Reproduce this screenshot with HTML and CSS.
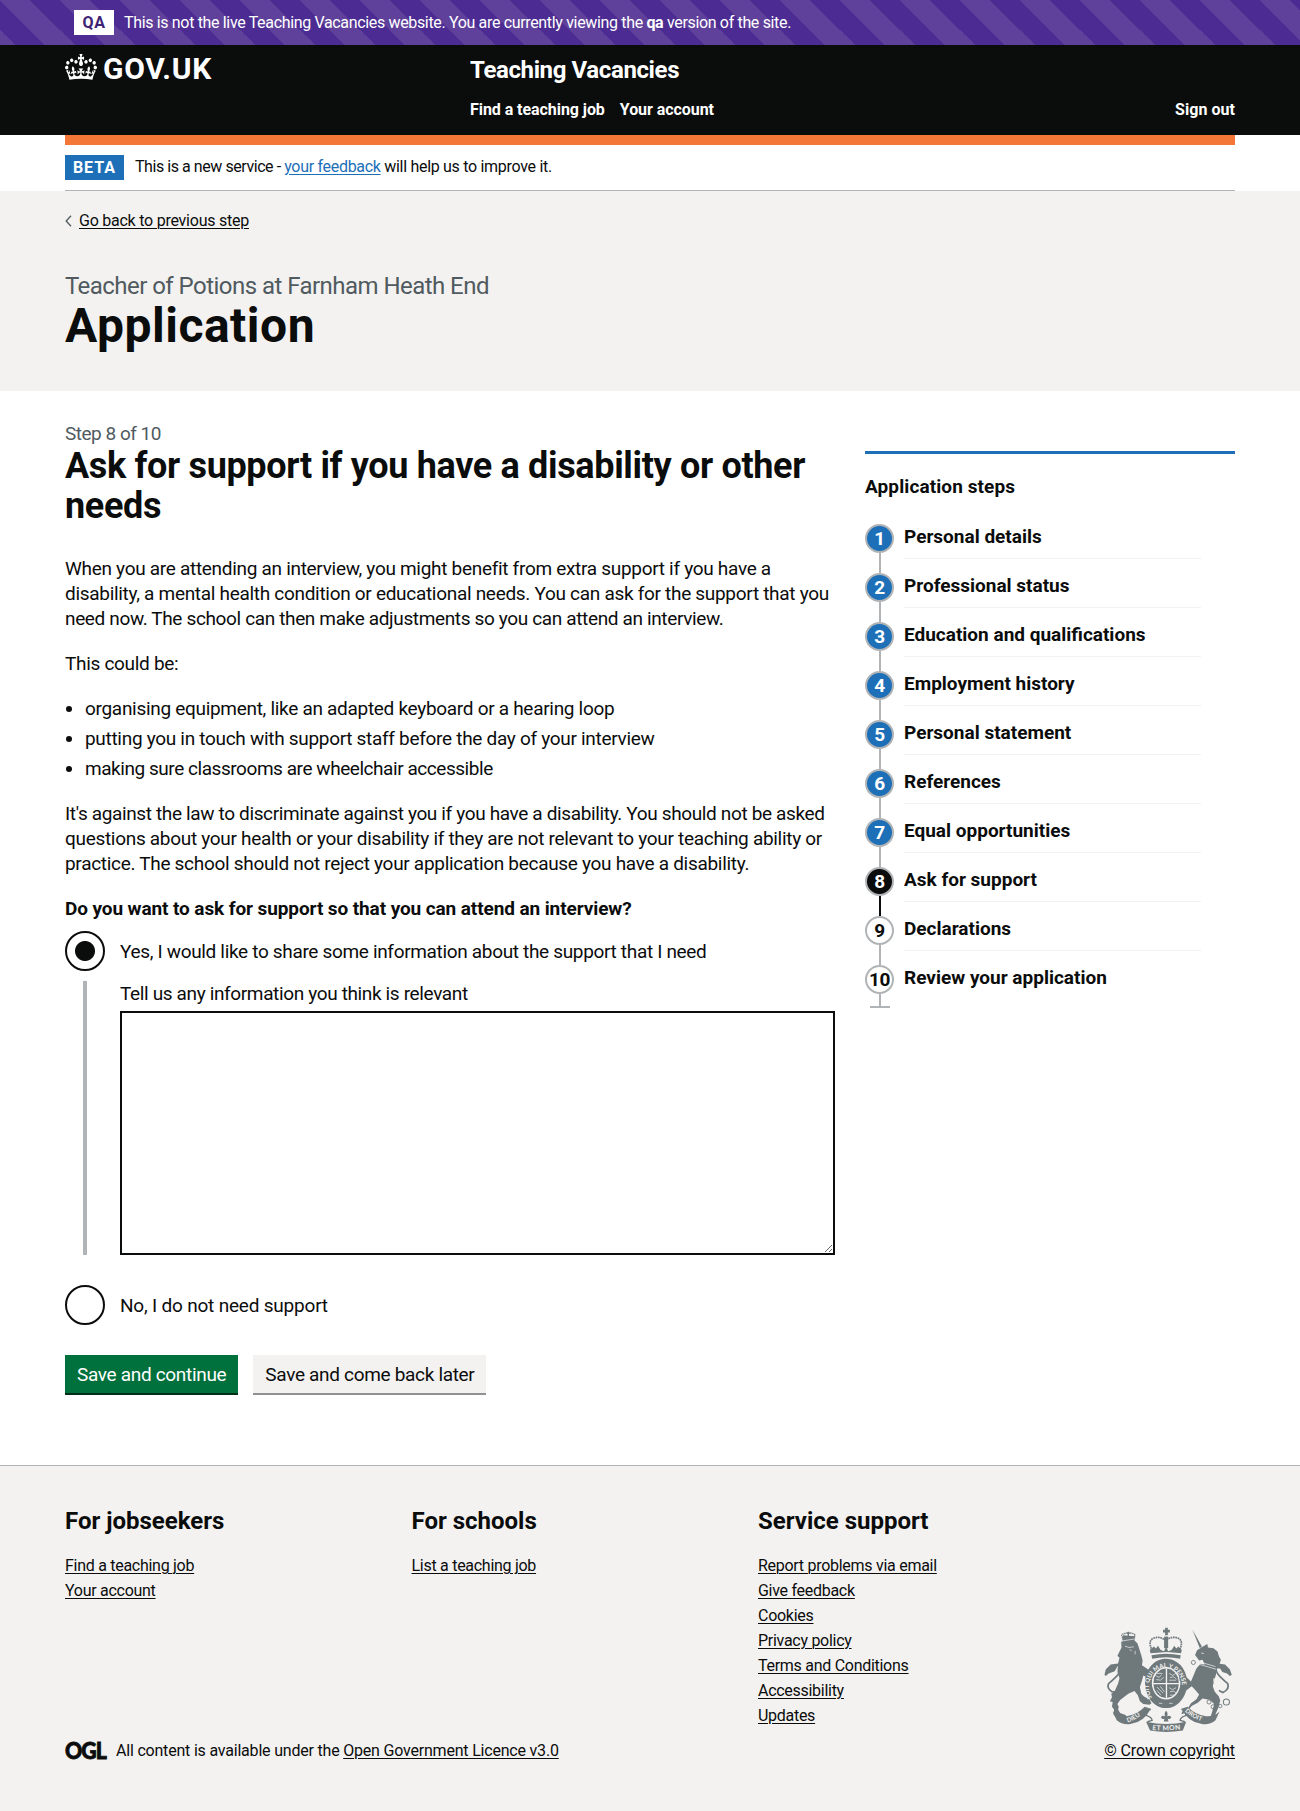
FILE: index.html
```
<!DOCTYPE html>
<html lang="en">
<head>
<meta charset="utf-8">
<title>Ask for support - Teaching Vacancies</title>
<link rel="stylesheet" href="styles.css">
</head>
<body>
<div class="environment">
  <strong class="environment-tag">QA</strong>
  <span class="environment-text">This is not the live Teaching Vacancies website. You are currently viewing the <b>qa</b> version of the site.</span>
</div>

<header class="header">
  <div class="container header-grid">
    <a class="logo" href="#">
      <svg class="crown" viewBox="0 0 132 97" preserveAspectRatio="none" aria-hidden="true"><path fill="#fff" fill-rule="evenodd" d="M25 30.2c3.5 1.5 7.7-.2 9.1-3.7 1.5-3.6-.2-7.8-3.9-9.2-3.6-1.4-7.6.3-9.1 3.9-1.4 3.5.3 7.5 3.9 9zM9 39.5c3.6 1.5 7.8-.2 9.2-3.7 1.5-3.6-.2-7.8-3.9-9.1-3.6-1.5-7.6.2-9.1 3.8-1.4 3.5.3 7.5 3.8 9zM4.4 57.2c3.5 1.5 7.7-.2 9.1-3.8 1.5-3.6-.2-7.7-3.9-9.1-3.5-1.5-7.6.3-9.1 3.8-1.4 3.5.3 7.6 3.9 9.1zm38.3-21.4c3.5 1.5 7.7-.2 9.1-3.8 1.5-3.6-.2-7.7-3.9-9.1-3.6-1.5-7.6.3-9.1 3.8-1.3 3.6.4 7.7 3.9 9.1zm64.4-5.6c-3.6 1.5-7.8-.2-9.1-3.7-1.5-3.6.2-7.8 3.8-9.2 3.6-1.4 7.7.3 9.2 3.9 1.3 3.5-.4 7.5-3.9 9zm15.9 9.3c-3.6 1.5-7.7-.2-9.1-3.7-1.5-3.6.2-7.8 3.7-9.1 3.6-1.5 7.7.2 9.2 3.8 1.5 3.5-.3 7.5-3.8 9zm4.7 17.7c-3.6 1.5-7.8-.2-9.2-3.8-1.5-3.6.2-7.7 3.9-9.1 3.6-1.5 7.7.3 9.2 3.8 1.3 3.5-.4 7.6-3.9 9.1zM89.3 35.8c-3.6 1.5-7.8-.2-9.2-3.8-1.4-3.6.2-7.7 3.9-9.1 3.6-1.5 7.7.3 9.2 3.8 1.4 3.6-.3 7.7-3.9 9.1zM69.7 17.7l8.9 4.7V9.3l-8.9 2.8c-.2-.3-.5-.6-.9-.9L72.4 0H59.6l3.5 11.2c-.3.3-.6.5-.9.9l-8.8-2.8v13.1l8.8-4.7c.3.3.6.7.9.9l-5 15.4v.1c-.2.8-.4 1.6-.4 2.4 0 4.1 3.1 7.5 7 8.1h.2c.3 0 .7.1 1 .1.4 0 .7 0 1-.1h.2c4-.6 7.1-4.1 7.1-8.1 0-.8-.1-1.7-.4-2.4V34l-5.1-15.4c.4-.2.7-.6 1-.9zM66 92.8c16.9 0 32.8 1.1 47.1 3.2 4-16.9 8.9-26.7 14-33.5l-9.6-3.4c1 4.9 1.1 7.2 0 10.2-1.5-1.4-3-4.3-4.2-8.7L108.6 76c2.8-2 5-3.2 7.5-3.3-4.4 9.4-10 11.9-13.6 11.2-4.3-.8-6.3-4.6-5.6-7.9 1-4.7 5.7-5.9 8-.5 4.3-8.7-3-11.4-7.6-8.8 7.1-7.2 7.9-13.5 2.1-21.1-8 6.1-8.1 12.3-4.5 20.8-4.7-5.4-12.1-2.5-9.5 6.2 3.4-5.2 7.9-2 7.2 3.1-.6 4.3-6.4 7.8-13.5 7.2-10.3-.9-10.9-8-11.2-13.8 2.5-.5 7.1 1.8 11 7.3L80.2 60c-4.1 4.4-8 5.3-12.3 5.4 1.4-4.4 8-11.6 8-11.6H55.5s6.4 7.2 7.9 11.6c-4.2-.1-8-1-12.3-5.4l1.4 16.4c3.9-5.5 8.5-7.7 10.9-7.3-.3 5.8-.9 12.8-11.1 13.8-7.2.6-12.9-2.9-13.5-7.2-.7-5 3.8-8.3 7.1-3.1 2.7-8.7-4.6-11.6-9.4-6.2 3.7-8.5 3.6-14.7-4.6-20.8-5.8 7.6-5 13.9 2.2 21.1-4.7-2.6-11.9.1-7.7 8.8 2.3-5.5 7.1-4.2 8.1.5.7 3.3-1.3 7.1-5.7 7.9-3.5.7-9-1.8-13.5-11.2 2.5.1 4.7 1.3 7.5 3.3l-4.7-15.4c-1.2 4.4-2.7 7.2-4.3 8.7-1.1-3-.9-5.3 0-10.2l-9.5 3.4c5 6.9 9.9 16.7 14 33.5 14.8-2.1 30.8-3.2 47.7-3.2z"/></svg>
      <span class="logo-text">GOV.UK</span>
    </a>
    <div class="header-content">
      <a class="service-name" href="#">Teaching Vacancies</a>
      <nav class="header-nav">
        <a href="#">Find a teaching job</a>
        <a href="#">Your account</a>
        <a class="sign-out" href="#">Sign out</a>
      </nav>
    </div>
  </div>
</header>

<div class="container">
  <div class="phase-banner">
    <strong class="phase-tag">BETA</strong>
    <span class="phase-text"><span class="phase-lead">This is a new service - </span><a href="#">your feedback</a> will help us to improve it.</span>
  </div>
</div>

<div class="hero">
  <div class="container">
    <div class="back">
      <svg width="7" height="12" viewBox="0 0 7 12" aria-hidden="true"><path d="M6 .8 1.2 6 6 11.2" fill="none" stroke="#505a5f" stroke-width="1.3"/></svg>
      <a href="#">Go back to previous step</a>
    </div>
    <p class="hero-caption">Teacher of Potions at Farnham Heath End</p>
    <h1 class="hero-title">Application</h1>
  </div>
</div>

<div class="container page">
  <main>
    <p class="step-caption">Step 8 of 10</p>
    <h2 class="page-title">Ask for support if you have a disability or other needs</h2>
    <p class="copy">When you are attending an interview, you might benefit from extra support if you have a<br>disability, a mental health condition or educational needs. You can ask for the support that you<br><span class="tight">need now. The school can then make adjustments so you can attend an interview.</span></p>
    <p class="copy">This could be:</p>
    <ul class="bullets">
      <li>organising equipment, like an adapted keyboard or a hearing loop</li>
      <li>putting you in touch with support staff before the day of your interview</li>
      <li class="tighter">making sure classrooms are wheelchair accessible</li>
    </ul>
    <p class="copy"><span class="tight">It's against the law to discriminate against you if you have a disability. You should not be asked</span><br>questions about your health or your disability if they are not relevant to your teaching ability or<br>practice. The school should not reject your application because you have a disability.</p>
    <form>
      <p class="question">Do you want to ask for support so that you can attend an interview?</p>
      <label class="radio"><input type="radio" name="support" checked><span>Yes, I would like to share some information about the support that I need</span></label>
      <div class="conditional">
        <label class="tight" for="details">Tell us any information you think is relevant</label>
        <textarea id="details"></textarea>
      </div>
      <label class="radio radio-no"><input type="radio" name="support"><span>No, I do not need support</span></label>
      <div class="buttons">
        <button type="button" class="button">Save and continue</button>
        <button type="button" class="button button-secondary">Save and come back later</button>
      </div>
    </form>
  </main>
  <aside class="steps">
    <h2>Application steps</h2>
    <ol>
      <li class="done"><span class="num">1</span><span class="name">Personal details</span></li>
      <li class="done"><span class="num">2</span><span class="name">Professional status</span></li>
      <li class="done"><span class="num">3</span><span class="name">Education and qualifications</span></li>
      <li class="done"><span class="num">4</span><span class="name">Employment history</span></li>
      <li class="done"><span class="num">5</span><span class="name">Personal statement</span></li>
      <li class="done"><span class="num">6</span><span class="name">References</span></li>
      <li class="done"><span class="num">7</span><span class="name">Equal opportunities</span></li>
      <li class="current"><span class="num">8</span><span class="name">Ask for support</span></li>
      <li><span class="num">9</span><span class="name">Declarations</span></li>
      <li><span class="num">10</span><span class="name">Review your application</span></li>
    </ol>
  </aside>
</div>

<footer class="footer">
  <div class="container">
    <div class="footer-nav">
      <section>
        <h2>For jobseekers</h2>
        <a href="#">Find a teaching job</a>
        <a href="#">Your account</a>
      </section>
      <section>
        <h2>For schools</h2>
        <a href="#">List a teaching job</a>
      </section>
      <section>
        <h2>Service support</h2>
        <a href="#">Report problems via email</a>
        <a href="#">Give feedback</a>
        <a href="#">Cookies</a>
        <a href="#">Privacy policy</a>
        <a href="#">Terms and Conditions</a>
        <a href="#">Accessibility</a>
        <a href="#">Updates</a>
      </section>
      <div class="crest-cell">
        <svg class="crest" viewBox="0 0 420 345" aria-hidden="true">
          <defs>
            <path id="garter" d="M162 228A49 56 0 1 1 241 228"/>
            <path id="ribbon-l" d="M90 300Q120 290 146 264"/>
            <path id="ribbon-m" d="M162 322Q203 326 248 320"/>
            <path id="ribbon-r" d="M258 268Q286 293 324 301"/>
          </defs>
          <g fill="#6f797c">
            <!-- lion -->
            <path d="M74 52l3-8 34 3 0 10-36 6zM72 80l-1-18 36-6 12 12 5 16 6 18 4 16-2 14 12 8 16 12 2 14-10 4-16-8-4 16-6 18 4 20 8 8 16 8 6 12-6 4-18-2-10-8-6-18-10-12-18 8-24 18-8 12 4 8-2 8 6 10 16 6 4 8-14 4-18-4-8-10 2-14-6-8 2-14-8-2 6-12-2-10 10-8 10-22 4-16-6-18 2-26 4-16-6-6z"/>
            <path d="M22 160l4-16 14-14 28-4-8 10-8 14-18 6-8 8z"/>
            <!-- unicorn -->
            <path d="M280 27l28 50-6 5zM288 102l6-14 16-10 14-8 2 10 16 2 12 10 4 14 6 10-4 12 2 14-20 0-24-8-8-18-10 2zM292 142l12-14 48 10-2 20-6 20-4 16 6 16 12 14 4 12-6 22-8 18-2 18-6 4-8-10 6-18 6-24-12-12-22-4-14 12-18 10-14 18-16 6 2-8 16-8 10-16 16-12 8-14-12-14-10-10-16 12-8-6 6-10-8-10-10-2 0-12 10-2 12 4 12 12z"/>
            <path d="M396 160l-6-16-14-14-26-4 8 10 10 16 14 4 8 8z"/>
            <!-- crown -->
            <path d="M200 22h8v6h6v8h-6v8h-8v-8h-6v-8h6zM157 97l-2-10 12-10 6 6 6-8 8 12 10 4 6-14 6 14 10-4 8-12 6 8 6-6 10 10-2 10-42-4zM160 103q43-9 86 0l-2 10q-40-9-82 0z"/>
            <path d="M197 48h12v34h-12z"/>
            <!-- garter -->
            <path fill-rule="evenodd" d="M203 113C238 113 265 145 265 184S238 258 203 258 141 224 141 184 168 113 203 113zM203 137C180 137 161 158 161 184S180 233 203 233 245 210 245 184 226 137 203 137z"/>
            <ellipse cx="203" cy="185" rx="38" ry="44"/>
            <!-- scrolls -->
            <path d="M46 268Q62 284 86 282 120 276 140 254L158 260Q138 300 98 305 74 308 58 294zM360 268Q344 284 320 282 286 276 266 254L248 260Q268 300 308 305 332 308 348 294zM144 298Q203 312 262 298L252 324Q203 332 156 324z"/>
            <path d="M203 266q-7 8-3 16-10-5-12 3 2 8 10 4l-2 8h14l-2-8q8 4 10-4-2-8-12-3 4-8-3-16z"/>
          </g>
          <g fill="none" stroke="#6f797c" stroke-width="5">
            <path d="M68 130q4 20-10 34t-24 22q-6 14 10 24l18 0"/>
            <path d="M350 130q-4 20 10 34t24 22q6 16-14 26l-12-6"/>
            <path d="M163 90q-14-26 0-36 22-10 38 6 20-16 40-6 14 10 0 36" stroke-dasharray="5 2"/>
            <path d="M158 262q-20 6-12 18 14 4 16 14l-14 4M248 262q20 6 12 18-14 4-16 14l14 4" stroke-width="4"/>
            <path d="M76 52q-8-12 2-12 14-6 30 0 6 2 0 14" stroke-width="4" stroke-dasharray="4 2"/>
            <path d="M92 34v14M88 38h8" stroke-width="4"/>
            <circle cx="329" cy="240" r="6" stroke-width="2.5"/><circle cx="341" cy="254" r="6" stroke-width="2.5"/><circle cx="362" cy="252" r="5" stroke-width="2.5"/><circle cx="380" cy="240" r="9" stroke-width="3"/><circle cx="283" cy="124" r="6" stroke-width="2.5"/>
          </g>
          <g fill="none" stroke="#f3f2f1" stroke-width="2">
            <ellipse cx="203" cy="185" rx="39" ry="45"/>
            <path d="M204 141v88M165 186h78" stroke-width="4"/>
            <path d="M172 162l10 6 8-8M174 174l12 2 10-8M176 156h16M212 156l10 6 10-6M214 168l12-2 8 8M212 176h20M176 196l18 18M176 206l12 14M186 194l12 16M212 198l10 6 10-6M214 210l12-2 6 6M214 220h12M182 244h10M212 244h10"/>
            <path d="M82 76l12 4 14-2M96 86l6 4M112 90v10M72 61l38-6M306 96l8 2M296 128l54 16M300 122l48 14" />
            <path d="M344 170v12M352 192v10" stroke-width="4"/>
          </g>
          <g class="crest-text">
            <text><textPath href="#garter" textLength="196">SOIT QUI MAL Y PENSE</textPath></text>
            <text><textPath href="#ribbon-l">DIEU</textPath></text>
            <text class="motto"><textPath href="#ribbon-m">ET MON</textPath></text>
            <text><textPath href="#ribbon-r">DROIT</textPath></text>
          </g>
        </svg>
      </div>
    </div>
    <div class="footer-meta">
      <svg class="ogl" width="41" height="20" viewBox="0 0 41 20" role="img" aria-label="OGL"><text x="0" y="18" textLength="41" lengthAdjust="spacingAndGlyphs">OGL</text></svg>
      <span class="licence">All content is available under the <a href="#">Open Government Licence v3.0</a></span>
      <a class="copyright" href="#">© Crown copyright</a>
    </div>
  </div>
</footer>
</body>
</html>
```
FILE: styles.css
```
* { box-sizing: border-box; }
body {
  margin: 0;
  font: 400 16px/20px Roboto, "Liberation Sans", sans-serif;
  letter-spacing: -0.32px;
  color: #0b0c0c;
  background: #fff;
}
h1, h2, p, ul, ol { margin: 0; padding: 0; }
a { color: inherit; text-decoration-thickness: 1px; text-underline-offset: 2px; }
.container { margin: 0 65px; }

.environment {
  display: flex;
  align-items: center;
  height: 45px;
  padding-left: 74px;
  gap: 10px;
  color: #fff;
  background: linear-gradient(45deg, #5f419b 25%, #4c2c92 25%, #4c2c92 50%, #5f419b 50%, #5f419b 75%, #4c2c92 75%) 0 0 / 60px 60px;
}
.environment-tag {
  width: 40px;
  line-height: 25px;
  text-align: center;
  letter-spacing: 0.6px;
  color: #3d2375;
  background: #fff;
}
.environment-text { letter-spacing: -0.34px; }

.header { height: 90px; background: #0b0c0c; color: #fff; }
.header a { color: #fff; text-decoration: none; }
.header-grid { display: grid; grid-template-columns: 405px 1fr; }
.logo { display: flex; align-items: flex-start; gap: 6px; padding-top: 9px; }
.crown { width: 32px; height: 26px; }
.logo-text { font-size: 30px; font-weight: 700; line-height: 30px; letter-spacing: 0.7px; }
.header-content { padding-top: 10px; }
.service-name { display: block; font-size: 24px; font-weight: 700; line-height: 30px; letter-spacing: -0.38px; }
.header-nav { display: flex; gap: 15px; margin-top: 15px; font-weight: 700; letter-spacing: -0.06px; }
.sign-out { margin-left: auto; letter-spacing: 0.05px; }

.phase-banner {
  display: flex;
  gap: 11px;
  height: 56px;
  padding-top: 10px;
  border-top: 10px solid #f47738;
  border-bottom: 1px solid #b1b4b6;
}
.phase-tag {
  width: 59px;
  height: 25px;
  line-height: 25px;
  text-align: center;
  letter-spacing: 1px;
  color: #fff;
  background: #1d70b8;
}
.phase-text { padding-top: 2px; letter-spacing: -0.3px; }
.phase-lead { letter-spacing: -0.44px; }
.phase-text a { color: #1d70b8; }

.hero { height: 200px; padding-top: 20px; background: #f3f2f1; }
.back { display: flex; align-items: center; gap: 7px; letter-spacing: -0.24px; }
.hero-caption { margin-top: 40px; font-size: 24px; line-height: 30px; letter-spacing: -0.54px; color: #505a5f; }
.hero-title { font-size: 48px; line-height: 50px; letter-spacing: 0.5px; }

.page { display: grid; grid-template-columns: 770px 370px; gap: 30px; height: 1074px; padding-top: 30px; font-size: 19px; line-height: 25px; letter-spacing: -0.3px; }
.step-caption { color: #505a5f; letter-spacing: -0.49px; }
.page-title { margin-bottom: 30px; font-size: 36px; line-height: 40px; letter-spacing: -0.34px; }
.copy { margin-bottom: 20px; white-space: nowrap; }
.tight { letter-spacing: -0.36px; }
.tighter { letter-spacing: -0.45px; }
.bullets { padding-left: 20px; margin-bottom: 20px; }
.bullets li + li { margin-top: 5px; }
.question { margin-bottom: 10px; font-weight: 700; letter-spacing: -0.1px; }
.radio { display: flex; align-items: center; gap: 15px; height: 40px; letter-spacing: -0.33px; }
.radio-no { letter-spacing: -0.2px; }
.radio input {
  appearance: none;
  width: 40px;
  height: 40px;
  margin: 0;
  border: 2px solid #0b0c0c;
  border-radius: 50%;
}
.radio input:checked { background: radial-gradient(circle, #0b0c0c 9.5px, transparent 10.5px); }
.conditional { margin: 10px 0 30px 18px; padding-left: 33px; border-left: 4px solid #b1b4b6; height: 274px; }
.conditional label { display: block; margin-bottom: 5px; }
.conditional textarea { display: block; width: 715px; height: 244px; border: 2px solid #0b0c0c; resize: vertical; background: #fff; }
.buttons { display: flex; gap: 15px; margin-top: 30px; }
.button {
  height: 38px;
  padding: 0 12px 0;
  border: 0;
  font: inherit;
  letter-spacing: -0.32px;
  color: #fff;
  background: #00703c;
  box-shadow: 0 2px 0 #002d18;
}
.button-secondary { color: #0b0c0c; background: #f3f2f1; box-shadow: 0 2px 0 #929191; }

.steps { margin-top: 30px; border-top: 3px solid #1d70b8; font-weight: 700; letter-spacing: 0; }
.steps h2 { margin-top: 20px; font-size: 19px; line-height: 25px; letter-spacing: 0.1px; }
.steps ol { margin-top: 25px; list-style: none; }
.steps li { position: relative; display: flex; gap: 10px; height: 49px; }
.num {
  width: 29px;
  height: 29px;
  border: 2px solid #b1b4b6;
  border-radius: 50%;
  line-height: 26px;
  text-align: center;
  letter-spacing: -0.3px;
}
.done .num { color: #fff; background: #1d70b8; }
.current .num { color: #fff; background: #0b0c0c; }
.name { width: 297px; height: 35px; border-bottom: 1px solid #f3f2f1; }
.steps li::before { content: ""; position: absolute; left: 14px; top: 29px; width: 2px; height: 20px; background: #b1b4b6; }
.steps .current::before { background: #0b0c0c; }
.steps li:last-child::before { height: 13px; }
.steps li:last-child::after { content: ""; position: absolute; left: 5px; top: 41px; width: 20px; height: 2px; background: #b1b4b6; }
.steps li:last-child .name { border: 0; }

.footer { height: 346px; padding-top: 40px; border-top: 1px solid #b1b4b6; background: #f3f2f1; }
.footer-nav { display: grid; grid-template-columns: 346.5px 346.5px 337px 140px; }
.footer h2 { margin-bottom: 17px; font-size: 24px; line-height: 30px; letter-spacing: 0; }
.footer section { height: 222px; }
.footer section a { display: table; line-height: 25px; letter-spacing: -0.28px; }
.crest-cell { display: flex; align-items: flex-end; }
.crest { flex: none; width: 143px; height: 118px; margin: 0 0 -10px 2px; }
.crest-text { font: 700 18px Lato, sans-serif; letter-spacing: 0; fill: #f3f2f1; }
.motto { font-size: 20px; letter-spacing: 1px; }
.footer-meta { display: flex; align-items: center; margin-top: 13px; }
.ogl { overflow: visible; }
.ogl text { font: 900 23px Lato, sans-serif; letter-spacing: -1px; fill: #0b0c0c; stroke: #0b0c0c; stroke-width: 0.8px; }
.licence { margin-left: 10px; letter-spacing: -0.2px; }
.copyright { margin-left: auto; letter-spacing: -0.1px; }
```
